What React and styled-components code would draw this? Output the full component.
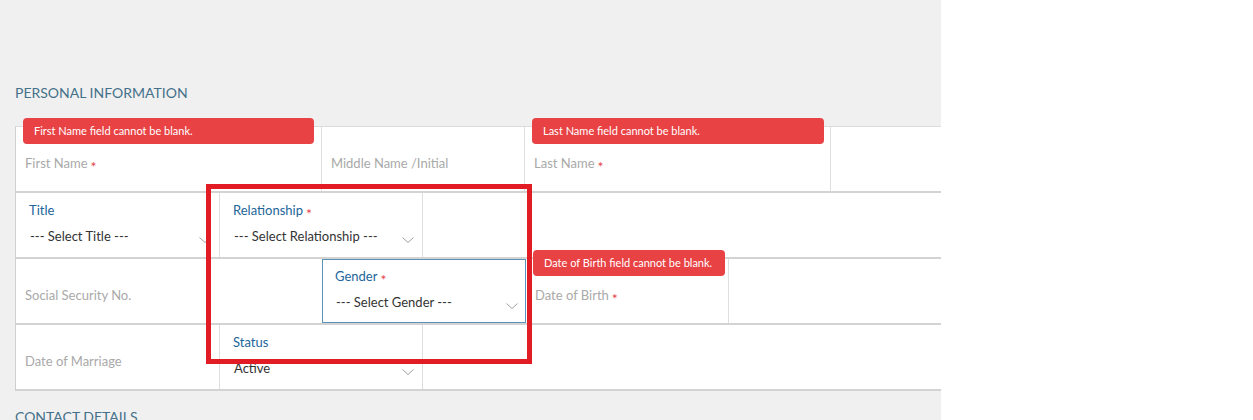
import React from 'react';
import styled, { createGlobalStyle } from 'styled-components';

const Global = createGlobalStyle`
  html, body { margin: 0; padding: 0; background: #ffffff; }
  body { font-family: Lato, "Open Sans", "Liberation Sans", sans-serif; }
`;

const Page = styled.div`
  display: flex;
  height: 420px;
  overflow: hidden;
`;

const Main = styled.main`
  position: relative;
  flex: none;
  width: 941px;
  box-sizing: border-box;
  padding: 85px 0 0 15px;
  background: #f0f0f0;
`;

const SectionTitle = styled.h2`
  margin: 0;
  font-size: 14px;
  font-weight: 400;
  line-height: 16px;
  color: #44708a;
  text-transform: uppercase;
`;

const Table = styled.div`
  margin: 25px 0 18px;
  border-top: 1px solid #dcdcdc;
  border-left: 1px solid #cfcfcf;
  background: #ffffff;
`;

const Row = styled.div`
  display: flex;
  height: 64px;
  border-bottom: 2px solid #d3d3d3;
`;

const Cell = styled.div`
  position: relative;
  box-sizing: border-box;
  flex: ${(p) => (p.$w ? `0 0 ${p.$w}px` : '1 1 auto')};
  height: 100%;
  border-right: ${(p) => (p.$divider ? '1px solid #dedede' : '0')};
  ${(p) => p.$focused && 'border: 1px solid #5b93b8;'}
  padding: ${(p) => (p.$focused ? '8px 7px 0 12px' : '9px 8px 0 13px')};
`;

const PlaceholderCell = styled(Cell)`
  padding: 28px 8px 0 9px;
  font-size: 13px;
  line-height: 16px;
  color: #a9a9a9;
`;

const Label = styled.div`
  font-size: 13px;
  line-height: 16px;
  color: #22659a;
`;

const Req = styled.span`
  position: relative;
  top: 4px;
  margin-left: 3px;
  font-size: 14px;
  line-height: 0;
  color: #e5434a;
`;

const SelectLine = styled.div`
  display: flex;
  justify-content: space-between;
  margin-top: 10px;
  padding-left: 1px;
  font-size: 13px;
  line-height: 16px;
  color: #333333;
`;

const Chevron = styled.svg`
  flex: none;
  margin-top: 9px;
  width: 12px;
  height: 6px;
`;

const Tooltip = styled.div`
  position: absolute;
  z-index: 2;
  top: -9px;
  left: 7px;
  width: ${(p) => p.$w}px;
  height: 26px;
  box-sizing: border-box;
  padding-left: 11px;
  border-radius: 4px;
  background: #e84244;
  color: #ffffff;
  font-size: 11px;
  line-height: 26px;
  white-space: nowrap;
`;

const Highlight = styled.div`
  position: absolute;
  z-index: 3;
  left: 206px;
  top: 184px;
  width: 326px;
  height: 180px;
  box-sizing: border-box;
  border: 5px solid #e21c24;
  pointer-events: none;
`;

const Arrow = () => (
  <Chevron viewBox="0 0 12 6">
    <polyline points="0.5,0.5 6,5.5 11.5,0.5" fill="none" stroke="#a0a0a0" strokeWidth="1" />
  </Chevron>
);

const Placeholder = ({ w, divider, required, error, errorW, children }) => (
  <PlaceholderCell $w={w} $divider={divider}>
    {error && <Tooltip $w={errorW}>{error}</Tooltip>}
    {children}
    {required && <Req>*</Req>}
  </PlaceholderCell>
);

const SelectField = ({ w, divider, focused, label, required, value }) => (
  <Cell $w={w} $divider={divider} $focused={focused}>
    <Label>
      {label}
      {required && <Req>*</Req>}
    </Label>
    <SelectLine>
      <span>{value}</span>
      <Arrow />
    </SelectLine>
  </Cell>
);

export default function App() {
  return (
    <>
      <Global />
      <Page>
        <Main>
          <SectionTitle>Personal Information</SectionTitle>
          <Table>
            <Row>
              <Placeholder w={306} divider required error="First Name field cannot be blank." errorW={291}>
                First Name
              </Placeholder>
              <Placeholder w={203} divider>Middle Name /Initial</Placeholder>
              <Placeholder w={306} divider required error="Last Name field cannot be blank." errorW={292}>
                Last Name
              </Placeholder>
              <Cell />
            </Row>
            <Row>
              <SelectField w={204} divider label="Title" value="--- Select Title ---" />
              <SelectField w={203} divider label="Relationship" required value="--- Select Relationship ---" />
              <Cell />
            </Row>
            <Row>
              <Placeholder w={306}>Social Security No.</Placeholder>
              <SelectField w={204} focused label="Gender" required value="--- Select Gender ---" />
              <Placeholder w={203} divider required error="Date of Birth field cannot be blank." errorW={192}>
                Date of Birth
              </Placeholder>
              <Cell />
            </Row>
            <Row>
              <Placeholder w={204} divider>Date of Marriage</Placeholder>
              <SelectField w={203} divider label="Status" value="Active" />
              <Cell />
            </Row>
          </Table>
          <SectionTitle>Contact Details</SectionTitle>
          <Highlight />
        </Main>
      </Page>
    </>
  );
}
